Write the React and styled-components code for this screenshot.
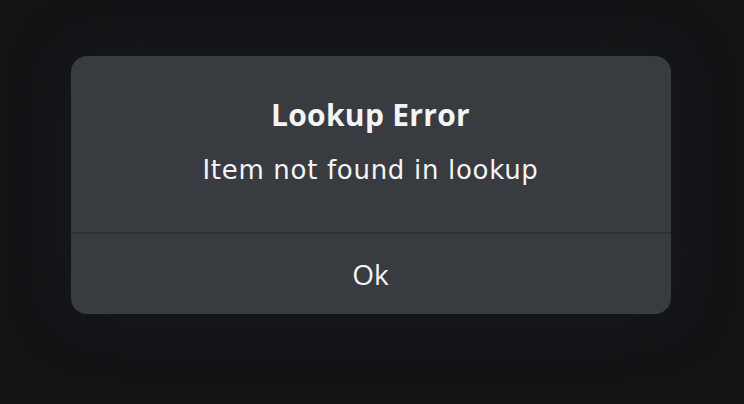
import React from "react";
import styled, { createGlobalStyle } from "styled-components";

const GlobalStyle = createGlobalStyle`
  html, body {
    margin: 0;
    padding: 0;
    background: #121315;
  }
  body {
    font-family: "Open Sans", "Noto Sans", sans-serif;
  }
`;

const Page = styled.div`
  width: 744px;
  height: 404px;
  display: flex;
  justify-content: center;
  align-items: flex-start;
  padding-top: 56px;
  box-sizing: border-box;
  background: #121315;
`;

const Dialog = styled.div`
  width: 600px;
  height: 258px;
  margin-left: -3px;
  background: #383b40;
  border-radius: 16px;
  display: flex;
  flex-direction: column;
  box-shadow: 0 0 60px rgba(40, 42, 46, 0.35);
  overflow: hidden;
`;

const Body = styled.div`
  flex: 1;
  display: flex;
  flex-direction: column;
  align-items: center;
  padding-top: 40px;
  gap: 19px;
  border-bottom: 2px solid #2e3034;
`;

const Title = styled.h2`
  margin: 0;
  font-size: 30px;
  font-weight: 700;
  letter-spacing: 0.3px;
  color: #f4f4f5;
  line-height: 38px;
`;

const Message = styled.p`
  margin: 0;
  font-family: "DejaVu Sans", "Open Sans", sans-serif;
  font-size: 26px;
  font-weight: 400;
  letter-spacing: 0.7px;
  color: #f4f4f5;
  line-height: 34px;
`;

const OkButton = styled.button`
  height: 80px;
  border: none;
  background: transparent;
  color: #f4f4f5;
  font-family: "Open Sans", "Noto Sans", sans-serif;
  font-size: 28px;
  cursor: pointer;
`;

export default function App() {
  return (
    <>
      <GlobalStyle />
      <Page>
        <Dialog>
          <Body>
            <Title>Lookup Error</Title>
            <Message>Item not found in lookup</Message>
          </Body>
          <OkButton>Ok</OkButton>
        </Dialog>
      </Page>
    </>
  );
}
